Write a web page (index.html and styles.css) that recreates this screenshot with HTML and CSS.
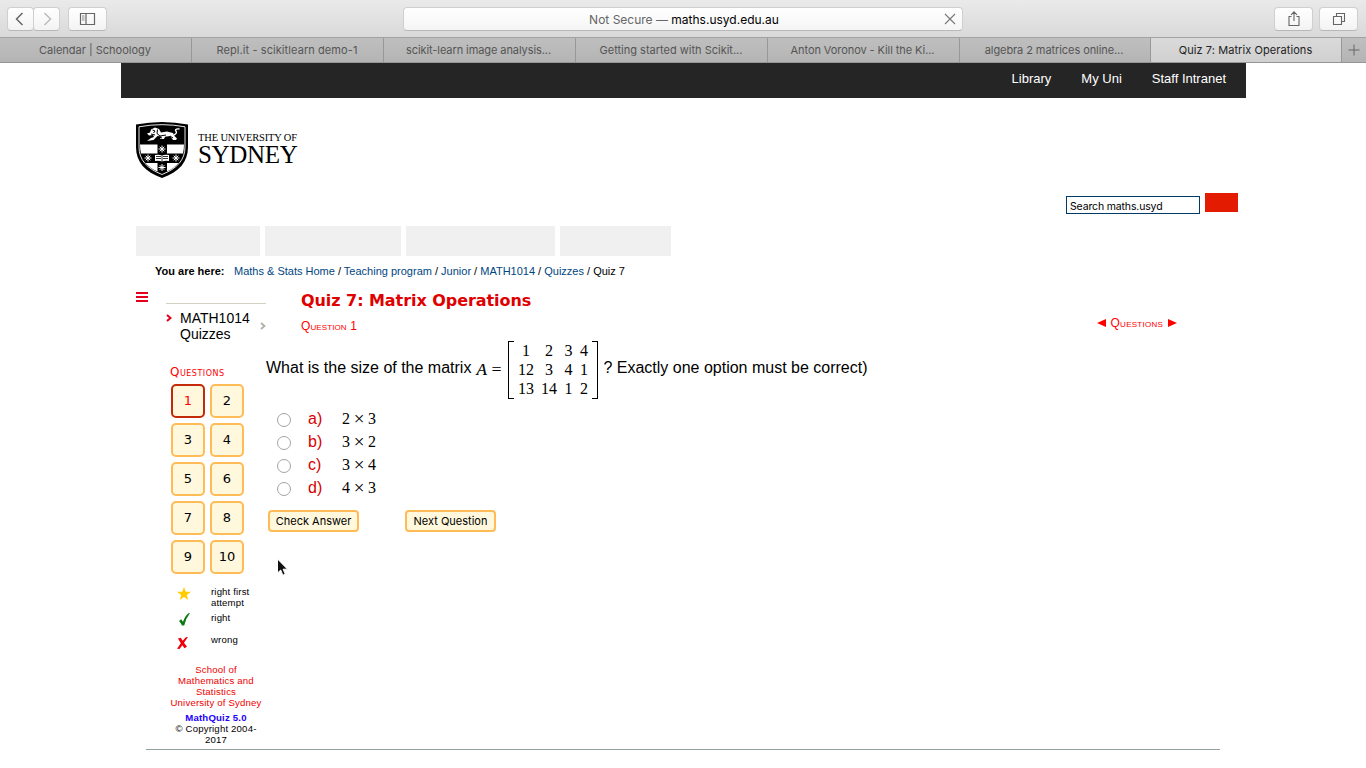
FILE: index.html
```html
<!DOCTYPE html>
<html lang="en">
<head>
<meta charset="utf-8">
<title>Quiz 7: Matrix Operations</title>
<link rel="stylesheet" href="styles.css">
</head>
<body>
<div class="toolbar">
  <div class="tool-group">
    <span class="tool nav-tool"><svg width="26" height="22" viewBox="0 0 26 22"><path d="M14.500 5 8.500 11l6 6" fill="none" stroke="#666" stroke-width="1.500"/></svg></span>
    <span class="tool nav-tool"><svg width="26" height="22" viewBox="0 0 26 22"><path d="m10.500 5 6 6-6 6" fill="none" stroke="#bbb" stroke-width="1.500"/></svg></span>
  </div>
  <span class="tool side-tool"><svg width="36" height="22" viewBox="0 0 36 22"><path d="M10.500 5.500h14v11h-14zM16 5.500v11" fill="none" stroke="#666" stroke-width="1.200"/><path d="M12 8h2.500M12 10h2.500M12 12h2.500" stroke="#888"/></svg></span>
  <div class="address"><span class="address-text"><span class="insecure">Not Secure —</span> maths.usyd.edu.au</span><svg class="stop" width="12" height="12" viewBox="0 0 12 12"><path d="m1 1 10 10M11 1 1 11" stroke="#777" stroke-width="1.100"/></svg></div>
  <span class="tool share-tool"><svg width="36" height="22" viewBox="0 0 36 22"><path d="M15.500 8.500h-2.500v9h10v-9h-2.500M18 13V4M15 6.800l3-3 3 3" fill="none" stroke="#666" stroke-width="1.100"/></svg></span>
  <span class="tool"><svg width="36" height="22" viewBox="0 0 36 22"><path d="M12.500 8.500h8v8h-8zM15.500 8V5.500h8v8h-3" fill="none" stroke="#666" stroke-width="1.100"/></svg></span>
</div>
<div class="tabs">
  <div class="tab">Calendar | Schoology</div>
  <div class="tab wide">Repl.it - scikitlearn demo-1</div>
  <div class="tab narrow">scikit-learn image analysis...</div>
  <div class="tab">Getting started with Scikit...</div>
  <div class="tab narrow">Anton Voronov - Kill the Ki...</div>
  <div class="tab narrow">algebra 2 matrices online...</div>
  <div class="tab active">Quiz 7: Matrix Operations</div>
  <div class="add"><svg width="12" height="12" viewBox="0 0 12 12"><path d="M6 .5v11M.5 6h11" stroke="#666"/></svg></div>
</div>
<div class="page">
  <div class="uni-bar"><span>Library</span><span>My Uni</span><span>Staff Intranet</span></div>
  <div class="brand">
    <svg class="crest" width="52" height="56" viewBox="0 0 52 56">
      <path d="M0 2.500Q26-2.500 52 2.500V25c0 15-9 25-26 31C9 50 0 40 0 25z" fill="#000"/>
      <path d="M3 4.800Q26 .5 49 4.800V25c0 13-8 21.500-23 27.500C11 46.500 3 38 3 25z" fill="none" stroke="#fff" stroke-width=".9"/>
      <path d="M4 22.500h17.500v9H5Q4 27 4 22.500zM31 22.500h17q0 4.500-1 9H31zM9.500 41h12v8.500Q13.500 46 9.500 41zM31 41h11.500q-4 5-11.500 8.500z" fill="#fff"/>
      <path d="M11 19l4-3 3-1-1-2-4 .500-2-2 3-1 1-3 4-2 4 1.500 2 3.500 6-1 6 1.500 1.500 3 2.500 2.500-1 1.500h-3l-3-4-5 .800-1 2.200h-4l1.500-2.500-4-.500-4 4z" fill="#fff"/>
      <path d="M38 13q4-2 1.500-4.500 0-2 4-1.500" fill="none" stroke="#fff" stroke-width="1.400"/>
      <path d="m16.500 8 2.500 1-1.500 2m4-3.500-.5 4 3 2.500 6-1M15 12l4 1m4 2 3 1m8-2 3 2" fill="none" stroke="#000" stroke-width="1"/>
      <g stroke="#fff" stroke-width="1"><path d="M26 23.500v7m-3.500-3.500h7M23.700 24.700l4.600 4.600m0-4.600-4.600 4.600M12 32.500v7m-3.500-3.500h7M9.700 33.700l4.600 4.600m0-4.600-4.600 4.600M40 32.500v7m-3.500-3.500h7M37.700 33.700l4.600 4.600m0-4.600-4.600 4.600M26 42v7m-3.500-3.500h7M23.700 43.200l4.600 4.600m0-4.600-4.600 4.600"/></g>
      <path d="M19 33q4-.8 7 .5 3-1.300 7-.5v6q-4-.8-7 .5-3-1.300-7-.5z" fill="#fff"/><path d="M20 34.500h5m-5 2h5m2-2h5m-5 2h5M26 33.500v6" stroke="#000" stroke-width=".8"/>
    </svg>
    <div class="wordmark"><div class="word-top">THE UNIVERSITY OF</div><div class="word-main">SYDNEY</div></div>
  </div>
  <div class="search"><div class="search-box">Search maths.usyd</div><div class="search-go"></div></div>
  <div class="menu"><i class="m1"></i><i class="m2"></i><i class="m3"></i><i class="m4"></i></div>
  <div class="crumbs"><b>You are here:</b><span class="trail"><a>Maths &amp; Stats Home</a> / <a>Teaching program</a> / <a>Junior</a> / <a>MATH1014</a> / <a>Quizzes</a> / Quiz 7</span></div>
  <div class="body">
    <div class="burger"><svg width="12" height="10" viewBox="0 0 12 10"><path d="M0 1h12M0 5h12M0 9h12" stroke="#e2001c" stroke-width="2"/></svg></div>
    <div class="side">
      <div class="unit">
        <svg class="mark" width="6" height="8" viewBox="0 0 6 8"><path d="m1 1 3.500 3L1 7" fill="none" stroke="#e2001c" stroke-width="2"/></svg>
        <span class="unit-name">MATH1014 Quizzes</span>
        <svg class="more" width="6" height="8" viewBox="0 0 6 8"><path d="m1 1 3.500 3L1 7" fill="none" stroke="#b0b0a8" stroke-width="1.800"/></svg>
      </div>
      <div class="side-title">Questions</div>
      <div class="numbers"><b class="current">1</b><b>2</b><b>3</b><b>4</b><b>5</b><b>6</b><b>7</b><b>8</b><b>9</b><b>10</b></div>
      <div class="legend">
        <svg class="star" width="14" height="13" viewBox="0 0 14 13"><path d="m7 0 1.700 4.700H14L9.800 7.900 11.300 13 7 10l-4.300 3 1.500-5.100L0 4.700h5.300z" fill="#fc0"/></svg><span>right first<br>attempt</span>
        <svg class="tick" width="11" height="13" viewBox="0 0 11 13"><path d="M0 8 2.200 6.300l1.800 2.500Q6 3 9.500.3L11 0Q7 5 5.200 12.500H3Q2 10 0 8z" fill="#0a7a10"/></svg><span>right</span>
        <svg class="cross" width="11" height="12" viewBox="0 0 11 12"><path d="M1 1.500 3.800.8l1.900 3L8.800.3 11 0 7 5.800l3 4-2.500 1.400-2.200-3L2.500 12 0 11.700l3.800-5.400z" fill="#f0000c"/></svg><span>wrong</span>
      </div>
      <div class="credit">School of<br>Mathematics and<br>Statistics<br>University of Sydney</div>
      <div class="version"><b>MathQuiz 5.0</b><br>© Copyright 2004-<br>2017</div>
    </div>
    <div class="main">
      <h1>Quiz 7: Matrix Operations</h1>
      <div class="sub"><span class="sub-title">Question 1</span><span class="jump"><svg width="9" height="8" viewBox="0 0 9 8"><path d="M9 0v8L0 4z" fill="red"/></svg><span>Questions</span><svg width="9" height="8" viewBox="0 0 9 8"><path d="M0 0v8l9-4z" fill="red"/></svg></span></div>
      <div class="question">
        <span class="ask">What is the size of the matrix</span><i class="var">A</i><span class="eq">=</span>
        <div class="matrix"><span>1</span><span>2</span><span>3</span><span>4</span><span>12</span><span>3</span><span>4</span><span>1</span><span>13</span><span>14</span><span>1</span><span>2</span></div>
        <span class="rest">? Exactly one option must be correct)</span>
      </div>
      <div class="options">
        <div class="option"><i class="radio"></i><span class="letter">a)</span><span class="math">2<u>×</u>3</span></div>
        <div class="option"><i class="radio"></i><span class="letter">b)</span><span class="math">3<u>×</u>2</span></div>
        <div class="option"><i class="radio"></i><span class="letter">c)</span><span class="math">3<u>×</u>4</span></div>
        <div class="option"><i class="radio"></i><span class="letter">d)</span><span class="math">4<u>×</u>3</span></div>
      </div>
      <div class="actions"><span class="action">Check Answer</span><span class="action">Next Question</span></div>
    </div>
  </div>
  <div class="rule"></div>
</div>
<svg class="pointer" width="13" height="19" viewBox="0 0 13 19"><path d="M1.500 1v14l3.200-3 2.200 5.200 2.400-1L7.100 11.200h4.400z" fill="#111" stroke="#fff"/></svg>
</body>
</html>
```
FILE: styles.css
```css
* { box-sizing: border-box; }
body { margin: 0; width: 1366px; height: 768px; overflow: hidden; background: #fff; color: #000; font-family: "Liberation Sans", Arial, sans-serif; }
svg { display: block; flex: none; }
span { white-space: nowrap; }

.toolbar { height: 38px; padding: 7px 7px 0; display: flex; align-items: flex-start; background: linear-gradient(#eaeaea, #d9d9d9); border-bottom: 1px solid #a2a2a2; }
.tool { display: flex; height: 24px; width: 39px; justify-content: center; background: linear-gradient(#fff, #f3f3f3); border: 1px solid #cfcfcf; border-bottom-color: #b8b8b8; border-radius: 4px; }
.tool-group { display: flex; margin-right: 9px; }
.nav-tool { width: 27px; margin-right: -1px; }
.side-tool { margin-right: 296px; }
.address { position: relative; width: 560px; height: 24px; display: flex; align-items: center; justify-content: center; background: linear-gradient(#fff, #f5f5f5); border: 1px solid #cfcfcf; border-bottom-color: #b8b8b8; border-radius: 4px; font: 12px/22px Inter, sans-serif; margin-right: 311px; }
.address-text { padding: 2px 0 0 2px; }
.insecure { color: #666; }
.stop { position: absolute; right: 6px; top: 5px; }
.share-tool { margin-right: 6px; }

.tabs { height: 25px; display: grid; grid-template-columns: repeat(5, 192px) 191px 191px 24px; background: linear-gradient(#bfbfbf, #b4b4b4); border-bottom: 1px solid #969696; font: 11px/24px Inter, sans-serif; color: #555; }
.tab { text-align: center; border-right: 1px solid #989898; overflow: hidden; white-space: nowrap; padding-right: 1px; }
.tab.wide { letter-spacing: .08px; }
.tab.narrow { letter-spacing: -.08px; padding-right: 2px; }
.tab.active { background: linear-gradient(#dadada, #d0d0d0); color: #222; letter-spacing: .08px; }
.add { display: grid; place-items: center; }

.page { width: 1125px; margin-left: 121px; }
.uni-bar { height: 35px; background: #252525; color: #fff; display: flex; justify-content: flex-end; gap: 30px; padding-right: 20px; font-size: 13px; line-height: 31px; }
.brand { height: 92px; padding: 24px 0 0 15px; display: flex; gap: 9px; }
.wordmark { font-family: "Liberation Serif", serif; padding: 10px 0 0 1px; white-space: nowrap; }
.word-top { font-size: 10.500px; line-height: 11px; letter-spacing: -.16px; }
.word-main { font-size: 25px; line-height: 23px; letter-spacing: -.3px; }
.search { height: 36px; display: flex; justify-content: flex-end; padding: 3px 8px 0 0; gap: 5px; }
.search-box { width: 134px; height: 18px; margin-top: 3px; border: 1px solid #003b68; padding: 1px 0 0 3px; font: 10.500px/17px Inter, sans-serif; letter-spacing: -.15px; }
.search-go { width: 33px; height: 19px; background: #e31b00; }
.menu { height: 30px; padding-left: 15px; display: flex; gap: 5px; }
.menu i { background: #f0f0f0; }
.m1 { width: 124px; }
.m2 { width: 136px; }
.m3 { width: 149px; }
.m4 { width: 111px; }
.crumbs { height: 30px; padding-left: 34px; display: flex; font-size: 11px; line-height: 30px; }
.crumbs b { width: 79px; }
.crumbs a { color: #00467f; }

.body { height: 463px; display: flex; padding-left: 15px; }
.burger { width: 30px; padding-top: 6px; }
.side { width: 100px; flex: none; padding-top: 17px; }
.unit { height: 60px; border-top: 1px solid #d5d2c4; display: flex; font-size: 14px; line-height: 16px; }
.mark { margin: 10px 8px 0 0; }
.unit-name { width: 80px; padding-top: 6px; white-space: normal; }
.more { margin-top: 18px; }
.side-title { height: 21px; padding-left: 4px; line-height: 18px; font-size: 12px; color: #f00; font-family: "DejaVu Sans", Verdana, sans-serif; font-variant: small-caps; letter-spacing: .5px; }
.numbers { display: grid; grid-template-columns: 34px 34px; grid-auto-rows: 34px; gap: 5px; padding-left: 5px; }
.numbers b { border: 2px solid #fb5; border-radius: 5px; background: #fff8dc; text-align: center; font: 13px/30px "DejaVu Sans", Verdana, sans-serif; }
.numbers .current { border-color: #c22a0a; color: #f00; }
.legend { display: grid; grid-template-columns: 45px 60px; grid-template-rows: 26px 22px 21px; padding-top: 12px; font-size: 9.600px; line-height: 11px; letter-spacing: .15px; }
.star { margin: 1px 0 0 11px; }
.tick { margin: 1px 0 0 13px; }
.cross { margin: 3px 0 0 11px; }
.credit, .version { text-align: center; font-size: 9.600px; line-height: 11px; white-space: nowrap; letter-spacing: .18px; }
.credit { padding-top: 9px; color: #f00000; }
.version { padding-top: 4px; }
.version b { color: #20f; letter-spacing: .2px; }

.main { flex: 1; }
h1 { margin: 0; padding: 5px 0 0 35px; height: 31px; font: bold 16px/19px "DejaVu Sans", Verdana, sans-serif; letter-spacing: -.06px; color: #e00000; }
.sub { height: 24px; display: flex; justify-content: space-between; padding: 0 69px 0 35px; font-size: 12px; color: #f00; font-variant: small-caps; line-height: 18px; letter-spacing: .1px; }
.jump { display: flex; align-items: center; gap: 5px; height: 11px; letter-spacing: .25px; }
.question { height: 60px; display: flex; align-items: center; font-size: 16px; line-height: 20px; }
.ask, .rest { padding-bottom: 6px; }
.var, .eq { font-family: "Liberation Serif", serif; font-size: 17px; padding-bottom: 3px; -webkit-text-stroke: .2px #000; }
.var { margin-left: 5px; }
.eq { margin: 0 7px 0 5px; }
.matrix { position: relative; width: 90px; height: 58px; margin-top: -2px; border: solid #000; border-width: 0 1px; display: grid; grid-template-columns: 17px 19px 10px 11px; column-gap: 5px; grid-auto-rows: 19px; justify-content: center; justify-items: center; font: 16px/20px "Liberation Serif", serif; }
.matrix::before, .matrix::after { content: ""; position: absolute; top: 0; bottom: 0; width: 5px; border: solid #000; border-width: 1px 0; }
.matrix::before { left: 0; }
.matrix::after { right: 0; }
.rest { margin-left: 5px; }
.options { padding-top: 7px; height: 109px; }
.option { height: 23px; display: flex; line-height: 22px; font-size: 16px; padding-left: 11px; }
.radio { width: 14px; height: 14px; margin-top: 5px; border: 1px solid #a4a4a4; border-radius: 50%; }
.letter { width: 34px; margin-left: 17px; color: #d80000; }
.math { display: flex; font: 16px/21px "Liberation Serif", serif; }
.math u { width: 18px; text-align: center; text-decoration: none; font-size: 19px; line-height: 22px; }
.actions { display: flex; gap: 46px; padding-left: 2px; }
.action { width: 91px; height: 22px; border: 2px solid #fb5; border-radius: 4px; background: #fff8dc; text-align: center; font: 11px/18px Inter, sans-serif; }
.rule { width: 1074px; height: 1px; margin-left: 25px; background: #93a29c; }
.pointer { position: absolute; left: 276px; top: 558px; }
```
